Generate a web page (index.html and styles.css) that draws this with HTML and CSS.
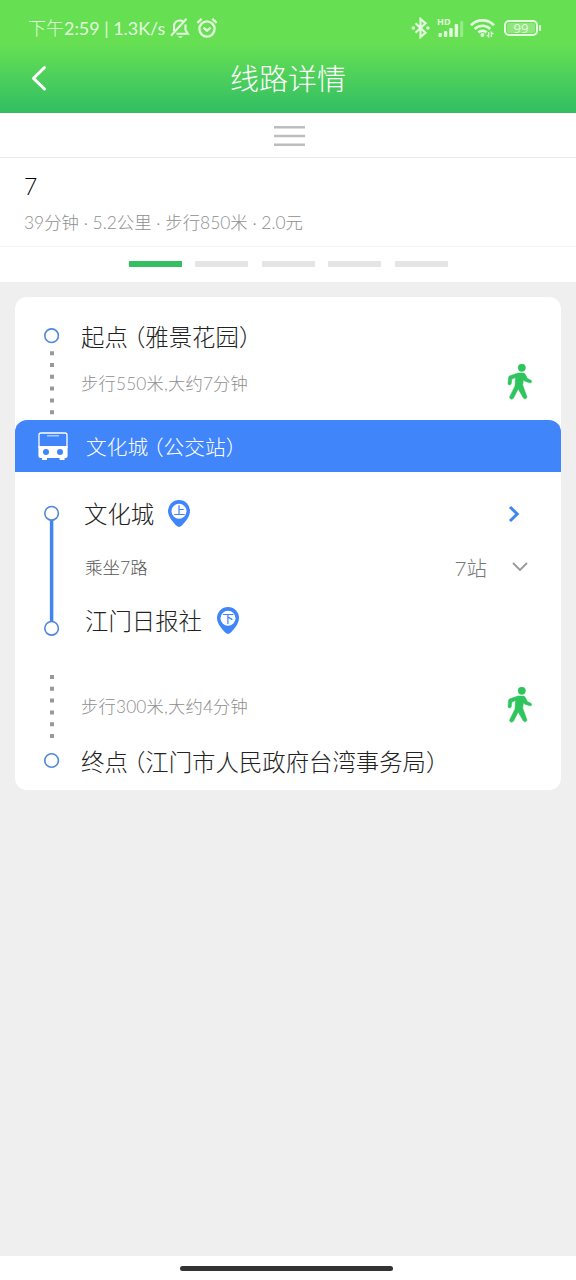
FILE: index.html
```html
<!DOCTYPE html>
<html lang="zh-CN">
<head>
<meta charset="utf-8">
<title>线路详情</title>
<link rel="stylesheet" href="styles.css">
</head>
<body>
<div class="app">
  <header class="header">
    <div class="status">
      <span class="status-text">下午<span class="clock">2:59 | 1.3K/s</span></span>
      <svg class="bell" width="20" height="22" viewBox="0 0 20 22" fill="none" stroke="currentColor" stroke-width="2.100">
        <path d="M4 14V9.500C4 5.500 6.500 3.500 10 3.500c1.200 0 2.200.3 3 .8M15.500 7.500V13l2.300 3.800H6.500M1 18.800L16.500 1.700"/><path d="M7.500 19.200h5.500l-2.700 2z" fill="currentColor" stroke="none"/>
      </svg>
      <svg class="alarm" width="22" height="22" viewBox="0 0 22 22" fill="none" stroke="currentColor" stroke-width="2.300">
        <circle cx="11" cy="12" r="7.600"/><path d="M1.300 5.800l4.400-3.900M20.700 5.800l-4.400-3.900M7.500 10.700l3.500 3 3.600-3"/>
      </svg>
      <span class="spacer"></span>
      <svg class="bt" width="20" height="22" viewBox="0 0 20 22" fill="none" stroke="currentColor" stroke-width="2.200">
        <path d="M4.500 6.300l10 9.400-5 4.300V2l5 4.300-10 9.400"/><circle cx="2.300" cy="11" r="1.800" fill="currentColor" stroke="none"/><circle cx="16.900" cy="11" r="1.800" fill="currentColor" stroke="none"/>
      </svg>
      <svg class="signal" width="28" height="24" viewBox="0 -3 28 24" fill="currentColor">
        <text x="0" y="6.300" class="hd">HD</text>
        <rect x="1.500" y="14" width="3.400" height="4" rx="1"/><rect x="6.900" y="12" width="3.400" height="6" rx="1"/><rect x="12.300" y="9" width="3.400" height="9" rx="1"/><rect x="17.700" y="5" width="3.400" height="13" rx="1"/><rect x="23.200" y="2" width="3" height="16" rx="1" opacity=".4"/>
      </svg>
      <svg class="wifi" width="26" height="20" viewBox="0 0 26 20" fill="none" stroke="currentColor" stroke-width="2.700">
        <path d="M1 7.200a16.300 16.300 0 0 1 23 0M4.700 11a11 11 0 0 1 15.600 0M8.400 14.500a5.900 5.900 0 0 1 8.200 0"/><circle cx="12.500" cy="17" r="2" fill="currentColor" stroke="none"/><path stroke-width="1.200" d="M18.700 14v4.800l-2-2M21.300 19v-4.800l2 2"/>
      </svg>
      <div class="battery"><span class="battery-body">99</span><span class="battery-tip"></span></div>
    </div>
    <div class="titlebar">
      <svg class="back" width="18" height="28" viewBox="0 0 18 28" fill="none" stroke="currentColor" stroke-width="3" stroke-linecap="round" stroke-linejoin="round"><path d="M14.500 3.500L3.500 14.300l11 10.700"/></svg>
      <h1 class="title">线路详情</h1>
    </div>
  </header>

  <div class="handle"><svg width="31" height="20" viewBox="0 0 31 20"><path d="M0 1.300h31M0 10h31M0 18.700h31" stroke="#bdbdc0" stroke-width="2.400"/></svg></div>
  <section class="summary">
    <div class="route-no">7</div>
    <div class="route-meta">39分钟 · 5.2公里 · 步行850米 · 2.0元</div>
  </section>
  <div class="pager"><i class="on"></i><i></i><i></i><i></i><i></i></div>

  <main class="card">
    <section class="leg leg-start">
      <svg class="rail" width="66" height="123" viewBox="0 0 66 123">
        <circle class="node" cx="36.600" cy="38.700" r="6.800"/>
        <path class="dots" d="M37 54.200V118"/>
      </svg>
      <div class="leg-body">
        <div class="row start-row"><span class="place">起点<span class="open">（</span>雅景花园）</span></div>
        <div class="row walk-row"><span class="walk-text">步行550米,大约7分钟</span>
          <svg class="walker" width="26" height="36" viewBox="0 0 26 36"><circle cx="14.800" cy="3.800" r="3.700"/><path d="M11 9h5c1 0 1.700.5 2.200 1.300l2.300 4.200 3 1.500c2 .8 1.300 3.200-.7 2.800l-5-1.500-1.300-1.500-.8 5.200 4 11c1 2.400-2 4-3.500 1.700L11.200 25 6.600 34c-1.400 2.300-5 .8-3.800-1.600L8 22l.4-8.500-3.600 1.800-.5 4.200c-.3 2-3.400 1.800-3.300-.3l.5-5.500c.1-1 .6-1.600 1.500-2z"/></svg>
        </div>
      </div>
    </section>

    <div class="station-bar">
      <svg class="bus" width="30" height="29" viewBox="0 0 30 29">
        <path d="M3 1h24q2 0 2 2v12H1V3q0-2 2-2z" fill="none" stroke="#fff" stroke-width="1.300"/>
        <path d="M9 3.800h12" stroke="#a9c8ff" stroke-width="1.600"/>
        <path d="M.4 14h29.200v10q0 2-2 2h-1v2h-5v-2H9v2H4v-2H2.400q-2 0-2-2z" fill="#fff"/>
        <circle cx="8" cy="20" r="3" fill="#4085f9"/><circle cx="22" cy="20" r="3" fill="#4085f9"/>
      </svg>
      <span class="station">文化城<span class="open">（</span>公交站）</span>
    </div>

    <section class="leg leg-ride">
      <svg class="rail" width="66" height="177" viewBox="0 0 66 177">
        <path class="line" d="M36.600 41V156"/>
        <circle class="node" cx="36.600" cy="41.300" r="6.800"/>
        <circle class="node" cx="36.600" cy="156.300" r="6.800"/>
      </svg>
      <div class="leg-body">
        <div class="row board-row"><span class="place">文化城</span>
          <svg class="pin" width="22" height="28" viewBox="0 0 22 28"><path d="M11 0a11 11 0 0 1 11 11c0 5.500-4.500 10.800-8.500 14.800q-2.500 2.200-5 0C4.500 21.800 0 16.500 0 11A11 11 0 0 1 11 0z"/><circle cx="11" cy="11.300" r="7.500"/><text x="11.300" y="15">上</text></svg>
          <svg class="next" width="12" height="18" viewBox="0 0 12 18"><path d="M2 2l7.200 7L2 16"/></svg>
        </div>
        <div class="row line-row"><span class="line-text">乘坐7路</span><span class="stops">7站</span>
          <svg class="more" width="18" height="12" viewBox="0 0 18 12"><path d="M2 2l7 7 7-7"/></svg>
        </div>
        <div class="row alight-row"><span class="place">江门日报社</span>
          <svg class="pin" width="22" height="28" viewBox="0 0 22 28"><path d="M11 0a11 11 0 0 1 11 11c0 5.500-4.500 10.800-8.500 14.800q-2.500 2.200-5 0C4.500 21.800 0 16.500 0 11A11 11 0 0 1 11 0z"/><circle cx="11" cy="11.300" r="7.500"/><text x="11" y="15.500">下</text></svg>
        </div>
      </div>
    </section>

    <section class="leg leg-end">
      <svg class="rail" width="66" height="141" viewBox="0 0 66 141">
        <path class="dots" d="M37 26V90"/>
        <circle class="node" cx="36.600" cy="111.500" r="6.800"/>
      </svg>
      <div class="leg-body">
        <div class="row walk-row"><span class="walk-text">步行300米,大约4分钟</span>
          <svg class="walker" width="26" height="36" viewBox="0 0 26 36"><circle cx="14.800" cy="3.800" r="3.700"/><path d="M11 9h5c1 0 1.700.5 2.200 1.300l2.300 4.200 3 1.500c2 .8 1.300 3.200-.7 2.800l-5-1.500-1.300-1.500-.8 5.200 4 11c1 2.400-2 4-3.500 1.700L11.200 25 6.600 34c-1.400 2.300-5 .8-3.800-1.600L8 22l.4-8.500-3.600 1.800-.5 4.200c-.3 2-3.400 1.800-3.300-.3l.5-5.500c.1-1 .6-1.600 1.500-2z"/></svg>
        </div>
        <div class="row end-row"><span class="place">终点<span class="open">（</span>江门市人民政府台湾事务局）</span></div>
      </div>
    </section>
  </main>

  <footer class="navbar"><div class="home"></div></footer>
</div>
</body>
</html>
```
FILE: styles.css
```css
* { box-sizing: border-box; }
body { margin: 0; font-family: Lato, "Noto Sans CJK SC", sans-serif; font-weight: 300; background: #efefef; color: #222; }
svg { display: block; flex: none; }
.app { width: 576px; height: 1280px; display: flex; flex-direction: column; overflow: hidden; white-space: nowrap; }

.header { height: 113px; flex: none; color: #fff; background: linear-gradient(#66df53 0, #66df53 44px, #31be63 113px); }
.status { height: 56px; padding: 0 35px 0 28px; display: flex; align-items: center; color: #e4fade; }
.status-text { font-size: 18px; line-height: 24px; width: 142px; }
.clock { font-size: 17.900px; font-weight: 400; }
.alarm { margin-left: 6px; }
.spacer { flex: 1; }
.signal { margin-left: 6px; }
.hd { font: 700 9px "Open Sans", sans-serif; }
.wifi { margin-left: 5px; }
.battery { display: flex; align-items: center; margin-left: 8px; }
.battery-body { width: 34px; height: 16px; border: 2px solid #e4fade; border-radius: 5px; background: #90e581; font: 400 13px/12px "Open Sans", sans-serif; text-align: center; box-shadow: inset 0 0 0 1px #66df53; }
.battery-tip { width: 2px; height: 6px; margin-left: 1px; background: #e4fade; border-radius: 1px; }
.titlebar { height: 57px; display: grid; grid-template-columns: 60px 1fr 60px; align-items: center; }
.back { margin: -14px 0 0 30px; }
.title { margin: -11px 0 0; font-size: 29px; line-height: 44px; font-weight: 300; text-align: center; }

.handle { height: 45px; flex: none; background: #fff; border-bottom: 1px solid #e9e9e9; display: flex; justify-content: center; padding: 13px 0 0 2px; }
.summary { height: 89px; flex: none; background: #fff; border-bottom: 1px solid #f5f5f5; padding: 13px 24px 0; }
.route-no { font-size: 23px; line-height: 30px; color: #000; }
.route-meta { font-size: 17.400px; line-height: 26px; margin-top: 9px; color: #8e8e8e; }
.pager { height: 35px; flex: none; background: #fff; display: flex; justify-content: center; gap: 13.500px; padding-top: 14px; }
.pager i { width: 53px; height: 6px; background: #e5e5e5; }
.pager .on { background: #34bf63; }

.card { margin: 14.500px 15px 0; height: 493.500px; flex: none; background: #fff; border-radius: 12px; overflow: hidden; }
.leg { display: grid; grid-template-columns: 66px 1fr; }
.leg-start { height: 123px; }
.leg-ride { height: 177px; }
.leg-end { height: 141px; }
.node { fill: #fff; stroke: #5087de; stroke-width: 1.600; }
.dots { stroke: #999; stroke-width: 4; stroke-dasharray: 4 7.800; }
.line { stroke: #4385f0; stroke-width: 3.500; }
.row { display: flex; align-items: center; padding-right: 28px; }
.place { font-size: 23.400px; line-height: 34px; }
.open { margin-left: .25em; font-feature-settings: "halt"; }
.walk-text { font-size: 17.300px; letter-spacing: .180px; color: #8e8e8e; flex: 1; }
.walker { fill: #2fc45e; stroke: #2fc45e; stroke-width: .5; }
.leg-start .leg-body { padding-top: 17px; }
.start-row { height: 46px; }
.walk-row { height: 47px; }
.leg-start .walk-row { height: 45px; }

.station-bar { height: 52.500px; background: #4085f9; border-radius: 12px 12px 0 0; display: flex; align-items: center; padding-left: 23px; color: #fff; }
.bus { margin-top: 1px; }
.station { margin-left: 18px; font-size: 20.700px; }

.leg-ride .leg-body { padding: 15px 0 0 4px; }
.board-row { height: 54px; }
.board-row .place { margin-left: -1px; }
.board-row .pin, .board-row .next { margin-top: -1px; }
.line-row { height: 51px; }
.alight-row { height: 57px; }
.alight-row .pin { margin-left: 15px; }
.pin { margin-left: 14px; fill: #4085f9; }
.pin circle { fill: #fff; }
.pin text { font-size: 11.500px; font-weight: 500; text-anchor: middle; }
.next { margin-left: auto; margin-right: 13px; }
.next path { fill: none; stroke: #4085f0; stroke-width: 3; }
.line-text { font-size: 17.500px; color: #555; flex: 1; }
.stops { font-size: 20.500px; color: #777; }
.more { margin: 0 4px 0 24px; }
.more path { fill: none; stroke: #999; stroke-width: 1.800; }
.leg-end .leg-body { padding-top: 32px; }
.leg-end .walk-text { padding-top: 2px; }
.end-row { height: 67px; }

.navbar { height: 24px; flex: none; margin-top: auto; background: #fff; padding-top: 9.500px; }
.home { width: 213px; height: 5.500px; margin: 0 auto 0 180px; border-radius: 3px; background: #333; }
```
